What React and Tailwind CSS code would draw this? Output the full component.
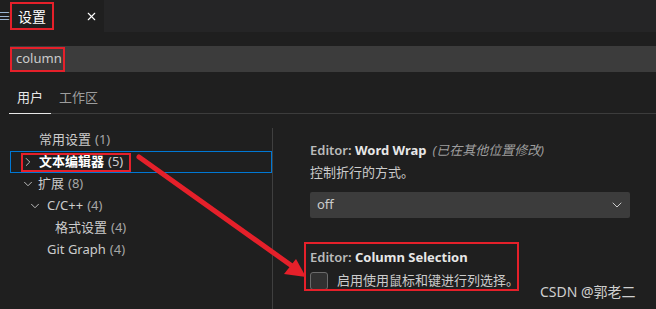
import { ChevronRight, ChevronDown, X } from 'lucide-react'

const FONT = "font-['Segoe_UI','Noto_Sans','Noto_Sans_CJK_SC',sans-serif]"

function TreeRow({ pad, gap, chevron, label, count, bold, selected }) {
  return (
    <div className={`ml-[10px] w-[262px] h-[22px] flex items-center border ${selected ? 'border-[#0078d4]' : 'border-transparent'} ${pad}`}>
      {chevron && (
        <span className={`w-[14px] flex-shrink-0 flex items-center text-[#c5c5c5] ${gap}`}>
          {chevron === 'right'
            ? <ChevronRight className="w-[14px] h-[14px]" strokeWidth={1.6} />
            : <ChevronDown className="w-[14px] h-[14px]" strokeWidth={1.6} />}
        </span>
      )}
      <span className={`text-[13px] ${bold ? 'font-bold text-white' : 'text-[#cccccc]'}`}>{label}</span>
      <span className={`ml-[4px] text-[13px] ${bold ? 'text-[#cccccc]' : 'text-[#a6a6a6]'}`}>({count})</span>
    </div>
  )
}

export default function App() {
  return (
    <div className={`relative w-[656px] h-[309px] bg-[#1f1f1f] overflow-hidden ${FONT}`}>
      {/* tab bar */}
      <div className="h-[32px] bg-[#252526] flex">
        <div className="w-[104px] bg-[#1f1f1f] flex items-center">
          <span className="ml-[-3px] text-[#9cb6d4] text-[14px] leading-none">≡</span>
          <span className="ml-[7px] text-[14px] text-white">设置</span>
          <X className="ml-[39px] w-[13px] h-[13px] text-white" strokeWidth={2} />
        </div>
      </div>

      {/* search */}
      <div className="mt-[14px] ml-[10px] h-[26px] bg-[#3c3c3c] flex items-center">
        <span className="ml-[6px] text-[13px] text-[#cccccc]">column</span>
      </div>

      {/* scope tabs */}
      <div className="mt-[13px] ml-[9px] h-[29px] flex flex-col">
        <div className="flex gap-[16px] pl-[8px] pt-[3px] h-[28px] text-[13px]">
          <span className="text-[#e7e7e7]">用户</span>
          <span className="text-[#9d9d9d]">工作区</span>
        </div>
        <div className="flex h-[1px]">
          <div className="w-[42px] bg-[#e7e7e7]" />
          <div className="flex-1 bg-[#3c3c3c]" />
        </div>
      </div>

      {/* body */}
      <div className="flex">
        <div className="w-[273px] mt-[14px] pt-[1px] h-[200px] border-r border-[#3f3f3f]">
          <TreeRow pad="pl-[28px]" label="常用设置" count={1} />
          <TreeRow pad="pl-[10px]" gap="mr-[4px]" chevron="right" label="文本编辑器" count={5} bold selected />
          <TreeRow pad="pl-[10px]" gap="mr-[3px]" chevron="down" label="扩展" count={8} />
          <TreeRow pad="pl-[17px]" gap="mr-[5px]" chevron="down" label="C/C++" count={4} />
          <TreeRow pad="pl-[44px]" label="格式设置" count={4} />
          <TreeRow pad="pl-[36px]" label="Git Graph" count={4} />
        </div>

        <div className="flex-1 pl-[37px] pt-[26px]">
          <div className="text-[13px] h-[22px] flex items-center">
            <span className="font-semibold text-[#bbbbbb]">Editor:&nbsp;</span>
            <span className="font-bold text-[#e7e7e7]">Word Wrap</span>
            <span className="ml-[6px] italic text-[#9d9d9d]">(已在其他位置修改)</span>
          </div>
          <div className="text-[13px] text-[#cccccc] h-[22px] flex items-center">控制折行的方式。</div>
          <div className="mt-[8px] w-[320px] h-[26px] bg-[#3c3c3c] rounded-[2px] flex items-center justify-between px-[7px]">
            <span className="text-[13px] text-[#cccccc]">off</span>
            <ChevronDown className="w-[16px] h-[16px] text-[#cccccc] mr-[-2px]" strokeWidth={1.5} />
          </div>

          <div className="mt-[30px] text-[13px] h-[20px] flex items-center">
            <span className="font-semibold text-[#bbbbbb]">Editor:&nbsp;</span>
            <span className="font-bold text-[#e7e7e7]">Column Selection</span>
          </div>
          <div className="mt-[4px] flex items-center h-[18px]">
            <div className="w-[18px] h-[18px] rounded-[3px] bg-[#313131] border border-[#6b6b6b]" />
            <span className="ml-[9px] text-[13px] text-[#cccccc]">启用使用鼠标和键进行列选择。</span>
          </div>
        </div>
      </div>

      {/* watermark */}
      <div className="absolute left-[540px] top-[281px] text-[14px] text-[#cfcfcf]">CSDN @郭老二</div>

      {/* red annotation boxes */}
      <div className="absolute left-[10px] top-[2px] w-[44px] h-[28px] border-2 border-[#e5202a]" />
      <div className="absolute left-[10px] top-[47px] w-[55px] h-[25px] border-2 border-[#e5202a]" />
      <div className="absolute left-[21px] top-[153px] w-[110px] h-[19px] border-2 border-[#e5202a]" />
      <div className="absolute left-[304px] top-[242px] w-[215px] h-[49px] border-2 border-[#e5202a]" />

      {/* red arrow */}
      <svg className="absolute left-0 top-0" width="656" height="309">
        <line x1="139" y1="157" x2="292" y2="266" stroke="#e5202a" strokeWidth="5" strokeLinecap="round" />
        <polygon points="306,277 284,274 296,259" fill="#e5202a" />
      </svg>
    </div>
  )
}
